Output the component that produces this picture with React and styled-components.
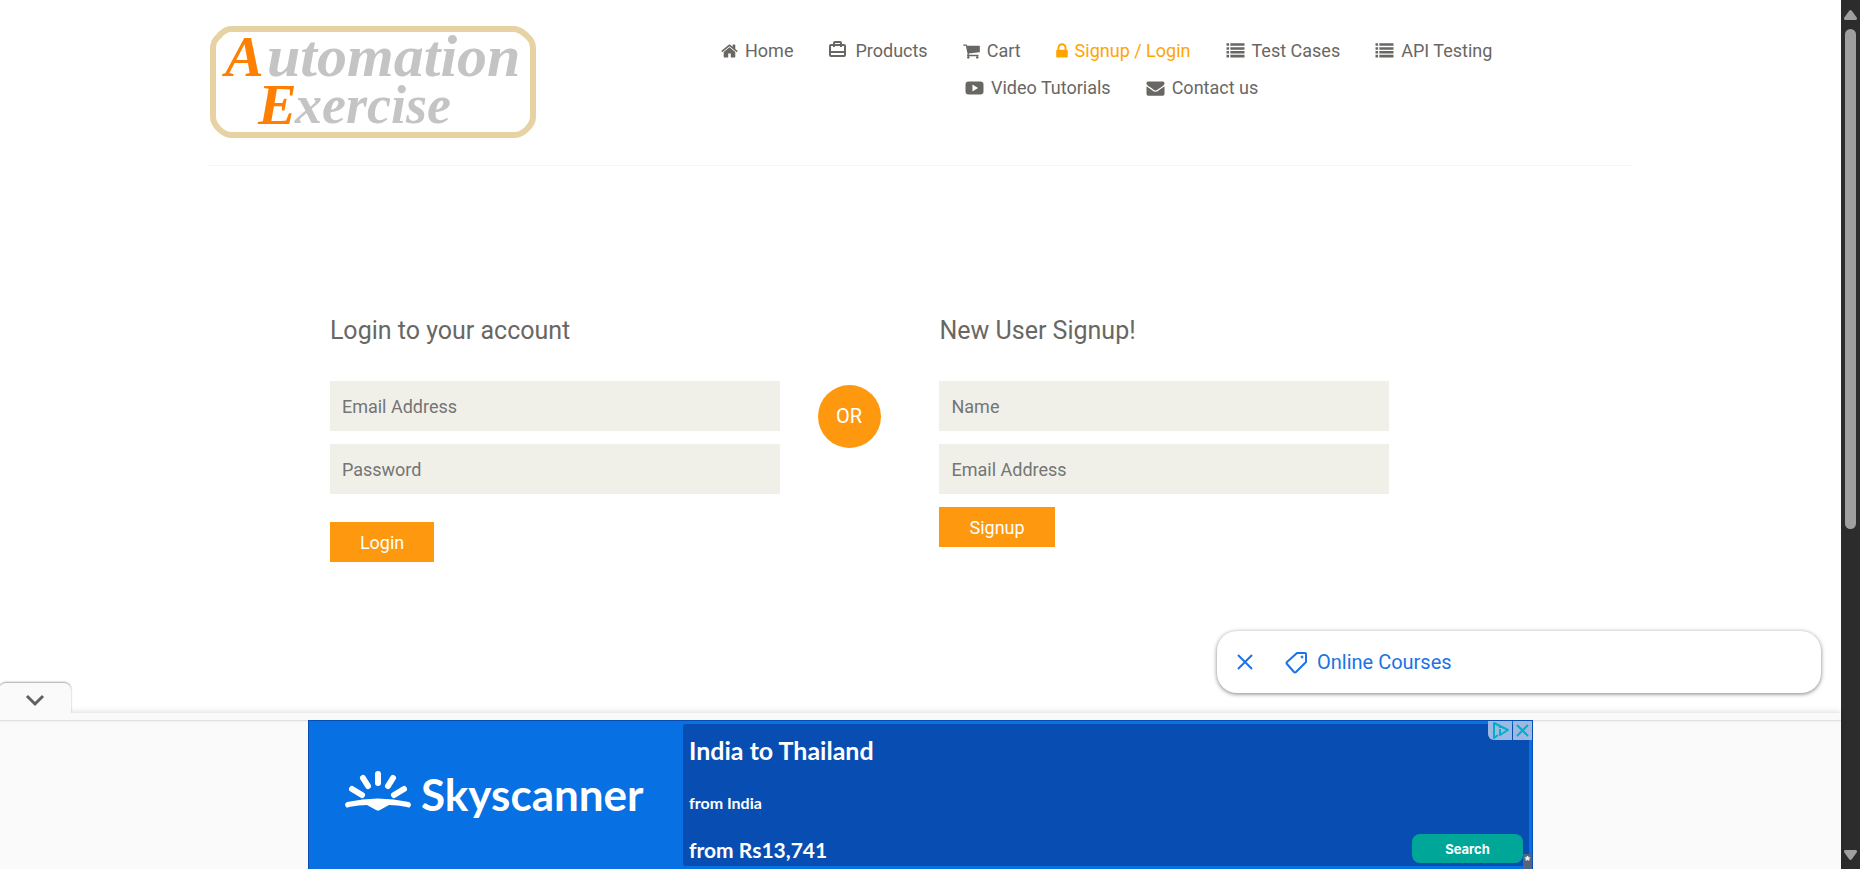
import React from "react";
import styled, { createGlobalStyle } from "styled-components";

const GlobalStyle = createGlobalStyle`
  *, *::before, *::after { box-sizing: border-box; }
  body { margin: 0; background: #fff; color: #696763; font-family: Roboto, "Liberation Sans", sans-serif; }
  h2, p, ul { margin: 0; padding: 0; }
  button, input { font-family: inherit; }
`;

const Shell = styled.div`
  display: flex;
  height: 100vh;
  overflow: hidden;
`;

const Page = styled.div`
  position: relative;
  flex: 1;
  min-width: 0;
  display: flex;
  flex-direction: column;
`;

const Content = styled.div`
  flex: 1;
  min-height: 0;
`;

const Container = styled.div`
  max-width: 1463px;
  margin: 0 auto;
  padding: 0 19px;
`;

const HeaderRow = styled.header`
  display: grid;
  grid-template-columns: 36% 1fr;
  padding: 25px 0 26px;
  border-bottom: 1px solid #f5f5f5;
`;

const LogoLink = styled.a`
  display: block;
  padding-left: 1px;
  svg { display: block; overflow: visible; }
`;

const Nav = styled.nav`
  display: flex;
  flex-direction: column;
  gap: 13px;
  padding-top: 14px;
`;

const NavRow = styled.ul`
  display: flex;
  gap: 35px;
  list-style: none;
  margin-left: ${(p) => (p.$indent ? "244px" : "0")};
`;

const NavLink = styled.a`
  display: flex;
  align-items: center;
  gap: 7px;
  color: ${(p) => (p.$active ? "#ffa500" : "#696763")};
  font-size: 18px;
  line-height: 24px;
  white-space: nowrap;
  text-decoration: none;
  svg { display: block; fill: currentColor; }
`;

const Forms = styled.main`
  display: grid;
  grid-template-columns: repeat(12, 1fr);
  max-width: 1463px;
  margin: 0 auto;
  padding-top: 151px;
`;

const FormColumn = styled.section`
  grid-column: ${(p) => p.$from} / span 4;
  padding: 0 19px;
`;

const FormTitle = styled.h2`
  margin-bottom: 36px;
  font-size: 25px;
  line-height: 28px;
  font-weight: 400;
`;

const Form = styled.form`
  display: flex;
  flex-direction: column;
  align-items: flex-start;
  gap: 13px;
`;

const Field = styled.input`
  width: 100%;
  height: 50px;
  padding: 0 12px;
  border: 0;
  background: #f0f0e9;
  color: #696763;
  font-size: 18px;
  &::placeholder { color: #757575; opacity: 1; }
`;

const SubmitButton = styled.button`
  height: 40px;
  margin-top: ${(p) => (p.$spaced ? "15px" : "0")};
  padding: 0 30px;
  border: 0;
  background: #fe980f;
  color: #fff;
  font-size: 18px;
`;

const OrColumn = styled.div`
  grid-column: 6 / span 1;
  padding: 68px 19px 0;
`;

const OrBadge = styled.p`
  width: 63px;
  height: 63px;
  border-radius: 50%;
  background: #fe980f;
  color: #fff;
  font-size: 20px;
  line-height: 63px;
  text-align: center;
`;

const CoursesCard = styled.aside`
  position: absolute;
  right: 20px;
  bottom: 176px;
  display: flex;
  align-items: center;
  width: 604px;
  height: 62px;
  padding-left: 18px;
  border-radius: 20px;
  background: #fff;
  box-shadow: 0 1px 4px rgba(0, 0, 0, 0.5);
`;

const CardClose = styled.button`
  display: flex;
  margin-right: 30px;
  padding: 0;
  border: 0;
  background: none;
  color: #1a73e8;
`;

const CardLink = styled.a`
  display: flex;
  align-items: center;
  gap: 9px;
  color: #1a73e8;
  font-size: 20px;
  text-decoration: none;
`;

const Anchor = styled.section`
  position: relative;
  display: flex;
  flex-direction: column;
  background: #fafafa;
  box-shadow: 0 -1px 6px rgba(0, 0, 0, 0.14);
`;

const AnchorEdge = styled.div`
  height: 7px;
  box-shadow: 0 1px 2px rgba(0, 0, 0, 0.14);
`;

const CollapseTab = styled.button`
  position: absolute;
  left: -1px;
  bottom: 100%;
  display: flex;
  align-items: center;
  justify-content: center;
  width: 72px;
  height: 30px;
  padding: 5px 0 0;
  border: 0;
  border-radius: 7px 7px 0 0;
  background: #fafafa;
  box-shadow: 0 -1px 2px rgba(0, 0, 0, 0.35);
  clip-path: inset(-5px -5px 0 -5px);
`;

const Ad = styled.div`
  position: relative;
  display: flex;
  width: 1225px;
  max-width: 100%;
  height: 149px;
  margin: 0 auto;
  padding: 3px 3px 3px 0;
  border: 1px solid #084eb2;
  border-bottom: 0;
  background: #0770e3;
  color: #fff;
  font-family: "Lato", "Liberation Sans", sans-serif;
`;

const Brand = styled.a`
  width: 374px;
  flex: none;
  padding: 45px 0 0 36px;
  svg { display: block; overflow: visible; }
`;

const Offer = styled.div`
  display: flex;
  flex: 1;
  align-items: flex-end;
  justify-content: space-between;
  padding: 12px 6px 3px;
  border-radius: 3px;
  background: #084eb2;
`;

const OfferText = styled.div`
  display: flex;
  flex-direction: column;
  align-self: stretch;
`;

const OfferLine = styled.p`
  margin-bottom: ${(p) => p.$gap || 0}px;
  font-size: ${(p) => p.$size}px;
  line-height: 28px;
  font-weight: 700;
`;

const SearchButton = styled.button`
  width: 111px;
  height: 29px;
  border: 0;
  border-radius: 8px;
  background: #00a698;
  color: #fff;
  font-family: Inter, sans-serif;
  font-size: 13px;
  font-weight: 700;
`;

const AdBadges = styled.div`
  position: absolute;
  top: 0;
  right: 0;
  display: flex;
  gap: 1px;
`;

const AdBadge = styled.button`
  display: flex;
  align-items: center;
  justify-content: center;
  width: ${(p) => p.$width}px;
  height: 19px;
  padding: 0;
  border: 0;
  border-bottom-left-radius: ${(p) => (p.$rounded ? "6px" : "0")};
  background: #9cb9e2;
`;

const AdMark = styled.span`
  position: absolute;
  right: 0;
  bottom: 0;
  width: 9px;
  height: 15px;
  background: #56657f;
  font-family: "Liberation Mono", monospace;
  font-size: 13px;
  line-height: 15px;
  font-weight: 700;
  text-align: center;
`;

const ScrollTrack = styled.div`
  display: flex;
  flex-direction: column;
  align-items: center;
  flex: none;
  width: 19px;
  padding: 10px 0 9px;
  background: #2c2c2c;
  svg { display: block; flex: none; }
`;

const ScrollThumb = styled.div`
  width: 11px;
  height: 500px;
  margin: 9px 0 auto;
  border-radius: 6px;
  background: #9f9f9f;
`;

const faPaths = {
  home: "M1472 992v480q0 26-19 45t-45 19h-384v-384h-256v384h-384q-26 0-45-19t-19-45v-480q0-1 .5-3t.5-3l575-474 575 474q1 2 1 6zm223-69l-62 74q-8 9-21 11h-3q-13 0-21-7l-692-577-692 577q-12 8-24 7-13-2-21-11l-62-74q-8-10-7-23.5t11-21.5l719-599q32-26 76-26t76 26l244 204v-195q0-14 9-23t23-9h192q14 0 23 9t9 23v408l219 182q10 8 11 21.5t-7 23.5z",
  cart: "M704 1536q0 52-38 90t-90 38-90-38-38-90 38-90 90-38 90 38 38 90zm896 0q0 52-38 90t-90 38-90-38-38-90 38-90 90-38 90 38 38 90zm128-1088v512q0 24-16.5 42.5t-40.5 21.5l-1044 122q13 60 13 70 0 16-24 64h920q26 0 45 19t19 45-19 45-45 19h-1024q-26 0-45-19t-19-45q0-11 8-31.5t16-36 21.5-40 15.5-29.5l-177-823h-204q-26 0-45-19t-19-45 19-45 45-19h256q16 0 28.5 6.5t19.5 15.5 13 24.5 8 26 5.5 29.5 4.5 26h1201q26 0 45 19t19 45z",
  lock: "M640 768h512v-192q0-106-75-181t-181-75-181 75-75 181v192zm832 96v576q0 40-28 68t-68 28h-960q-40 0-68-28t-28-68v-576q0-40 28-68t68-28h32v-192q0-184 132-316t316-132 316 132 132 316v192h32q40 0 68 28t28 68z",
  list: "M0 1280h256v256H0zM0 896h256v256H0zM0 512h256v256H0zM0 128h256v256H0zM384 1280h1408v256H384zM384 896h1408v256H384zM384 512h1408v256H384zM384 128h1408v256H384z",
  video: "M300 256h1192q300 0 300 300v680q0 300-300 300H300q-300 0-300-300V556q0-300 300-300zM690 540v712l560-356z",
  mail: "M1792 710v794q0 66-47 113t-113 47h-1472q-66 0-113-47t-47-113v-794q44 49 101 87 362 246 497 345 57 42 92.5 65.5t94.5 48 110 24.5h2q51 0 110-24.5t94.5-48 92.5-65.5q170-123 498-345 57-39 100-87zm0-294q0 79-49 151t-122 123q-376 261-468 325-10 7-42.5 31t-54 38.5-52 32.5-57.5 27-50 9h-2q-23 0-50-9t-57.5-27-52-32.5-54-38.5-42.5-31q-91-64-262-182.5t-205-142.5q-62-42-117-115.5t-55-136.5q0-78 41.5-130t118.5-52h1472q65 0 112.5 47t47.5 113z",
};

// Each glyph's view box is trimmed to its own advance width: [x, width].
const faBoxes = {
  home: [64, 1664],
  cart: [64, 1664],
  lock: [320, 1152],
  list: [0, 1792],
  video: [0, 1792],
  mail: [0, 1792],
};

function FaIcon({ name }) {
  const [x, w] = faBoxes[name];
  return (
    <svg width={Math.round((w * 18) / 1728)} height="18" viewBox={`${x} 0 ${w} 1792`} aria-hidden="true">
      <path fillRule="evenodd" d={faPaths[name]} />
    </svg>
  );
}

function SuitcaseIcon() {
  return (
    <svg width="20" height="24" viewBox="0 0 20 24" aria-hidden="true">
      <g fill="none" stroke="currentColor" strokeWidth="2">
        <rect x="2" y="6" width="15" height="11" rx="1" />
        <path d="M6 8V4Q6 3 7 3H12Q13 3 13 4V8M2 13H17" />
      </g>
    </svg>
  );
}

function SiteLogo() {
  return (
    <svg
      width="329"
      height="114"
      viewBox="0 0 329 114"
      fontFamily="'Liberation Serif', serif"
      fontStyle="italic"
      fontWeight="700"
    >
      <path
        d="M22 4H306Q312 5 318 11Q324 16 324 23V92Q324 98 318 104Q312 110 306 110H22Q16 110 10 104Q4 98 4 92V23Q4 16 10 11Q16 4 22 4Z"
        fill="none"
        stroke="#e6d2a2"
        strokeWidth="6"
      />
      <text x="16" y="51" fontSize="58" fill="#ff8000">A</text>
      <text x="58" y="51" fontSize="60" fill="#c4c4c4">utomation</text>
      <text x="49" y="99" fontSize="58" fill="#ff8000">E</text>
      <text x="86" y="98" fontSize="54" fill="#c4c4c4">xercise</text>
    </svg>
  );
}

function SkyscannerLogo() {
  return (
    <svg width="320" height="60" viewBox="0 0 320 60" fill="#fff">
      <g stroke="#fff" strokeWidth="6" strokeLinecap="round">
        <path d="M33 5V14M18 9L23 17M48 9L43 17M7 20L17 26M59 20L49 26" />
      </g>
      <path d="M0 36Q0 34 2 33Q33 26 64 33Q66 34 66 36L65 38Q64 39 62 38Q52 36 44 36L35 41Q33 42 31 41L22 36Q14 36 4 38Q2 39 1 38Z" />
      <text x="76" y="42" fontFamily="Lato" fontWeight="700" fontSize="44">Skyscanner</text>
    </svg>
  );
}

const rows = [
  [
    { label: "Home", icon: "home" },
    { label: "Products", icon: "products" },
    { label: "Cart", icon: "cart" },
    { label: "Signup / Login", icon: "lock", active: true },
    { label: "Test Cases", icon: "list" },
    { label: "API Testing", icon: "list" },
  ],
  [
    { label: "Video Tutorials", icon: "video" },
    { label: "Contact us", icon: "mail" },
  ],
];

export default function App() {
  return (
    <>
      <GlobalStyle />
      <Shell>
        <Page>
          <Content>
            <Container>
              <HeaderRow>
                <LogoLink href="#" aria-label="Automation Exercise"><SiteLogo /></LogoLink>
                <Nav>
                  {rows.map((items, i) => (
                    <NavRow key={i} $indent={i === 1}>
                      {items.map((item) => (
                        <li key={item.label}>
                          <NavLink href="#" $active={item.active}>
                            {item.icon === "products" ? <SuitcaseIcon /> : <FaIcon name={item.icon} />}
                            {item.label}
                          </NavLink>
                        </li>
                      ))}
                    </NavRow>
                  ))}
                </Nav>
              </HeaderRow>
            </Container>
            <Forms>
              <FormColumn $from={2}>
                <FormTitle>Login to your account</FormTitle>
                <Form>
                  <Field type="email" placeholder="Email Address" aria-label="Email Address" />
                  <Field type="password" placeholder="Password" aria-label="Password" />
                  <SubmitButton type="button" $spaced>Login</SubmitButton>
                </Form>
              </FormColumn>
              <OrColumn><OrBadge>OR</OrBadge></OrColumn>
              <FormColumn $from={7}>
                <FormTitle>New User Signup!</FormTitle>
                <Form>
                  <Field type="text" placeholder="Name" aria-label="Name" />
                  <Field type="email" placeholder="Email Address" aria-label="Email Address" />
                  <SubmitButton type="button">Signup</SubmitButton>
                </Form>
              </FormColumn>
            </Forms>
          </Content>
          <CoursesCard>
            <CardClose type="button" aria-label="Close">
              <svg width="20" height="20" viewBox="0 0 20 20" fill="none" stroke="currentColor" strokeWidth="2">
                <path d="M3 3L17 17M17 3L3 17" />
              </svg>
            </CardClose>
            <CardLink href="#">
              <svg width="23" height="23" viewBox="0 0 23 23" fill="none" stroke="currentColor" strokeWidth="2" strokeLinejoin="round">
                <path d="M12 2H20Q21 2 21 3V11L11 21Q10 22 9 21L2 13Q1 12 2 11Z" />
                <circle cx="17" cy="6" r="1" fill="currentColor" strokeWidth="1" />
              </svg>
              Online Courses
            </CardLink>
          </CoursesCard>
          <Anchor>
            <CollapseTab type="button" aria-label="Collapse">
              <svg width="20" height="14" viewBox="0 0 20 14" fill="none" stroke="#616161" strokeWidth="3">
                <path d="M2 2L10 10L18 2" />
              </svg>
            </CollapseTab>
            <AnchorEdge />
            <Ad>
              <Brand href="#" aria-label="Skyscanner"><SkyscannerLogo /></Brand>
              <Offer>
                <OfferText>
                  <OfferLine $size={25} $gap={25}>India to Thailand</OfferLine>
                  <OfferLine $size={16} $gap={19}>from India</OfferLine>
                  <OfferLine $size={21}>from Rs13,741</OfferLine>
                </OfferText>
                <SearchButton type="button">Search</SearchButton>
              </Offer>
              <AdBadges>
                <AdBadge type="button" $width={24} $rounded aria-label="Ad choices">
                  <svg width="17" height="17" viewBox="0 0 17 17" fill="none" stroke="#00aecd" strokeWidth="2" strokeLinejoin="round">
                    <path d="M6 13L2 16V1L16 8L8 13V7M8 4V6" />
                  </svg>
                </AdBadge>
                <AdBadge type="button" $width={19} aria-label="Close ad">
                  <svg width="13" height="13" viewBox="0 0 13 13" stroke="#00aecd" strokeWidth="2">
                    <path d="M1 1L12 12M12 1L1 12" />
                  </svg>
                </AdBadge>
              </AdBadges>
              <AdMark>*</AdMark>
            </Ad>
          </Anchor>
        </Page>
        <ScrollTrack>
          <svg width="13" height="10" viewBox="0 0 13 10" fill="#9f9f9f"><path d="M5 1Q6.500 -1 8 1L13 8Q13 10 12 10H1Q0 10 0 8Z" /></svg>
          <ScrollThumb />
          <svg width="13" height="10" viewBox="0 0 13 10" fill="#9f9f9f"><path d="M5 9Q6.500 11 8 9L13 2Q13 0 12 0H1Q0 0 0 2Z" /></svg>
        </ScrollTrack>
      </Shell>
    </>
  );
}
